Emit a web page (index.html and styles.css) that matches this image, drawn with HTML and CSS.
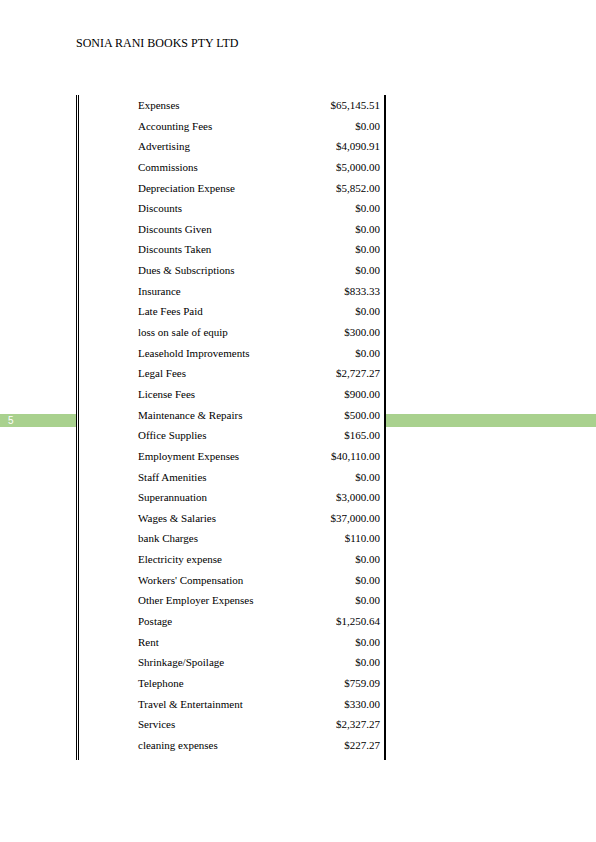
FILE: index.html
```html
<!DOCTYPE html>
<html>
<head>
<meta charset="utf-8">
<link rel="stylesheet" href="styles.css">
</head>
<body>
<div class="page">
  <div class="header">SONIA RANI BOOKS PTY LTD</div>
  <div class="band"><span class="pnum">5</span></div>
  <div class="sheet">
    <div class="row"><span>Expenses</span><span>$65,145.51</span></div>
    <div class="row"><span>Accounting Fees</span><span>$0.00</span></div>
    <div class="row"><span>Advertising</span><span>$4,090.91</span></div>
    <div class="row"><span>Commissions</span><span>$5,000.00</span></div>
    <div class="row"><span>Depreciation Expense</span><span>$5,852.00</span></div>
    <div class="row"><span>Discounts</span><span>$0.00</span></div>
    <div class="row"><span>Discounts Given</span><span>$0.00</span></div>
    <div class="row"><span>Discounts Taken</span><span>$0.00</span></div>
    <div class="row"><span>Dues &amp; Subscriptions</span><span>$0.00</span></div>
    <div class="row"><span>Insurance</span><span>$833.33</span></div>
    <div class="row"><span>Late Fees Paid</span><span>$0.00</span></div>
    <div class="row"><span>loss on sale of equip</span><span>$300.00</span></div>
    <div class="row"><span>Leasehold Improvements</span><span>$0.00</span></div>
    <div class="row"><span>Legal Fees</span><span>$2,727.27</span></div>
    <div class="row"><span>License Fees</span><span>$900.00</span></div>
    <div class="row"><span>Maintenance &amp; Repairs</span><span>$500.00</span></div>
    <div class="row"><span>Office Supplies</span><span>$165.00</span></div>
    <div class="row"><span>Employment Expenses</span><span>$40,110.00</span></div>
    <div class="row"><span>Staff Amenities</span><span>$0.00</span></div>
    <div class="row"><span>Superannuation</span><span>$3,000.00</span></div>
    <div class="row"><span>Wages &amp; Salaries</span><span>$37,000.00</span></div>
    <div class="row"><span>bank Charges</span><span>$110.00</span></div>
    <div class="row"><span>Electricity expense</span><span>$0.00</span></div>
    <div class="row"><span>Workers' Compensation</span><span>$0.00</span></div>
    <div class="row"><span>Other Employer Expenses</span><span>$0.00</span></div>
    <div class="row"><span>Postage</span><span>$1,250.64</span></div>
    <div class="row"><span>Rent</span><span>$0.00</span></div>
    <div class="row"><span>Shrinkage/Spoilage</span><span>$0.00</span></div>
    <div class="row"><span>Telephone</span><span>$759.09</span></div>
    <div class="row"><span>Travel &amp; Entertainment</span><span>$330.00</span></div>
    <div class="row"><span>Services</span><span>$2,327.27</span></div>
    <div class="row"><span>cleaning expenses</span><span>$227.27</span></div>
  </div>
</div>
</body>
</html>
```

FILE: styles.css
```css
html, body {
  margin: 0;
  padding: 0;
  background: #ffffff;
}
body {
  width: 596px;
  height: 842px;
  overflow: hidden;
  font-family: "Liberation Serif", "Times New Roman", serif;
  color: #000;
}
.page {
  position: relative;
  width: 596px;
  height: 842px;
}
.header {
  padding: 36px 0 0 76px;
  font-size: 12px;
  line-height: 14px;
  height: 61px;
  box-sizing: border-box;
}
.band {
  position: absolute;
  left: 0;
  top: 414px;
  width: 596px;
  height: 13px;
  background: #a9d18e;
  z-index: 0;
}
.pnum {
  position: absolute;
  left: 8px;
  top: 0;
  font-family: "Liberation Sans", Arial, sans-serif;
  font-size: 10px;
  line-height: 13px;
  color: #ffffff;
}
.sheet {
  position: relative;
  z-index: 1;
  margin: 36px 0 0 76px;
  width: 310px;
  box-sizing: border-box;
  border-left: 3px double #000;
  border-right: 2px solid #000;
  background: #fff;
  padding: 0 4px 4px 59px;
}
.row {
  display: flex;
  justify-content: space-between;
  height: 20.65px;
  line-height: 20.65px;
  font-size: 11px;
  white-space: nowrap;
}
.sheet .row:first-child {
  margin-top: -2px;
}
```
